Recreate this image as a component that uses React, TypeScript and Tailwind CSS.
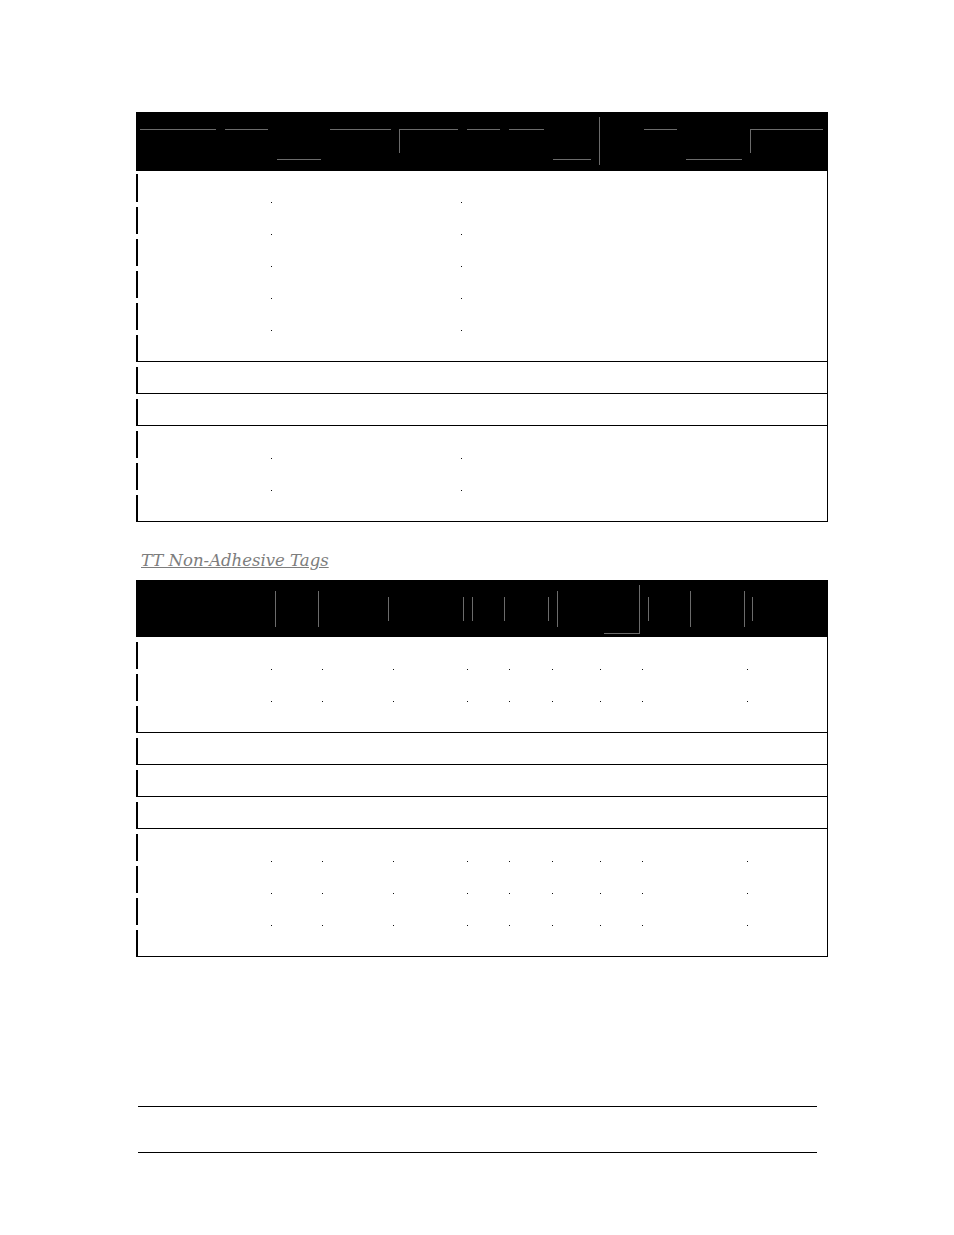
import React from "react";

type RowSpec = { lines: number; first?: number };

const grayLine = "#6b6b6b";

// dot offsets (margin-left classes) for each table's cell columns
const dots1 = ["ml-[135px]", "ml-[189px]"];
const dots2 = [
  "ml-[135px]",
  "ml-[50px]",
  "ml-[70px]",
  "ml-[73px]",
  "ml-[41px]",
  "ml-[42px]",
  "ml-[47px]",
  "ml-[41px]",
  "ml-[104px]",
];

const Line = ({
  index,
  count,
  first,
  dots,
}: {
  index: number;
  count: number;
  first?: number;
  dots: string[];
}) => {
  const isFirst = index === 0;
  const isLast = index === count - 1;
  const short = isFirst && first === 31;
  return (
    <div
      className={`flex flex-col ${
        short ? "h-[31px]" : isLast ? "h-[31px]" : "h-[32px]"
      }`}
    >
      <div className={`flex items-start ${short ? "h-[3px]" : "h-[5px]"}`}>
        {!isFirst &&
          dots.map((m, i) => (
            <span key={i} className={`${m} w-px h-px bg-[#111] shrink-0`} />
          ))}
      </div>
      <div className="flex-1 w-[1.5px] bg-black" />
    </div>
  );
};

const Row = ({ spec, dots }: { spec: RowSpec; dots: string[] }) => (
  <div className="border-b border-black flex flex-col">
    {Array.from({ length: spec.lines }).map((_, i) => (
      <Line
        key={i}
        index={i}
        count={spec.lines}
        first={spec.first}
        dots={dots}
      />
    ))}
  </div>
);

const Header1 = () => (
  <div className="h-[59px] bg-black">
    <svg width="692" height="59" viewBox="0 0 692 59" className="block">
      <g stroke={grayLine} strokeWidth="1" fill="none" shapeRendering="crispEdges">
        <path d="M4 17.5H80M89 17.5H132M194 17.5H255M331 17.5H364M373 17.5H408M508 17.5H541" />
        <path d="M263.5 41V17.5H322M614.5 41V17.5H687" />
        <path d="M141 47.5H185M417 47.5H455M550 47.5H606" />
        <path d="M463.5 5V53" />
      </g>
    </svg>
  </div>
);

const Header2 = () => (
  <div className="h-[57px] bg-black">
    <svg width="692" height="57" viewBox="0 0 692 57" className="block">
      <g stroke={grayLine} strokeWidth="1" fill="none" shapeRendering="crispEdges">
        <path d="M139.5 11V47M182.5 11V47M421.5 11V47M554.5 11V47M608.5 11V47" />
        <path d="M252.5 17V41M327.5 17V41M336.5 17V41M368.5 17V41M412.5 17V41M512.5 17V41M616.5 17V41" />
        <path d="M503.5 5V53.5H468" />
      </g>
    </svg>
  </div>
);

const Table = ({
  header,
  rows,
  dots,
}: {
  header: React.ReactNode;
  rows: RowSpec[];
  dots: string[];
}) => (
  <div className="w-[692px]">
    {header}
    <div className="border-r border-black">
      {rows.map((r, i) => (
        <Row key={i} spec={r} dots={dots} />
      ))}
    </div>
  </div>
);

export default function App() {
  return (
    <div className="w-[954px] h-[1235px] bg-white pt-[112px] pl-[136px]">
      <Table
        header={<Header1 />}
        rows={[{ lines: 6, first: 31 }, { lines: 1 }, { lines: 1 }, { lines: 3 }]}
        dots={dots1}
      />
      <div className="h-[58px] pt-[26px] pl-[5px]">
        <span
          className="italic underline text-[16.5px] leading-[22px] text-[#7d7d7d]"
          style={{ fontFamily: '"DejaVu Serif", "Liberation Serif", serif' }}
        >
          TT Non-Adhesive Tags
        </span>
      </div>
      <Table
        header={<Header2 />}
        rows={[
          { lines: 3 },
          { lines: 1 },
          { lines: 1 },
          { lines: 1 },
          { lines: 4 },
        ]}
        dots={dots2}
      />
      <div className="ml-[2px] mt-[149px] w-[679px] h-px bg-black" />
      <div className="ml-[2px] mt-[45px] w-[679px] h-px bg-black" />
    </div>
  );
}
